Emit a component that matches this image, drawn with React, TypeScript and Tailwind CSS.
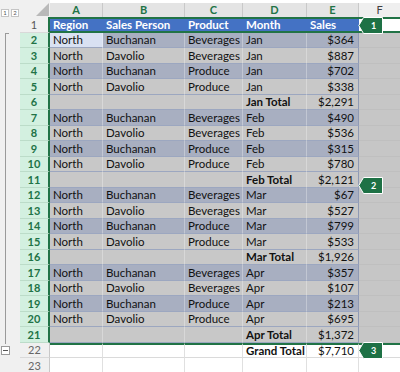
import clsx from "clsx"

const cn = clsx

type Kind = "head" | "blue" | "gray" | "total" | "grand" | "empty"

interface SheetRow {
  n: number
  kind: Kind
  cells: string[]
}

const rows: SheetRow[] = [
  { n: 1, kind: "head", cells: ["Region", "Sales Person", "Product", "Month", "Sales"] },
  { n: 2, kind: "blue", cells: ["North", "Buchanan", "Beverages", "Jan", "$364"] },
  { n: 3, kind: "gray", cells: ["North", "Davolio", "Beverages", "Jan", "$887"] },
  { n: 4, kind: "blue", cells: ["North", "Buchanan", "Produce", "Jan", "$702"] },
  { n: 5, kind: "gray", cells: ["North", "Davolio", "Produce", "Jan", "$338"] },
  { n: 6, kind: "total", cells: ["", "", "", "Jan Total", "$2,291"] },
  { n: 7, kind: "blue", cells: ["North", "Buchanan", "Beverages", "Feb", "$490"] },
  { n: 8, kind: "gray", cells: ["North", "Davolio", "Beverages", "Feb", "$536"] },
  { n: 9, kind: "blue", cells: ["North", "Buchanan", "Produce", "Feb", "$315"] },
  { n: 10, kind: "gray", cells: ["North", "Davolio", "Produce", "Feb", "$780"] },
  { n: 11, kind: "total", cells: ["", "", "", "Feb Total", "$2,121"] },
  { n: 12, kind: "blue", cells: ["North", "Buchanan", "Beverages", "Mar", "$67"] },
  { n: 13, kind: "gray", cells: ["North", "Davolio", "Beverages", "Mar", "$527"] },
  { n: 14, kind: "blue", cells: ["North", "Buchanan", "Produce", "Mar", "$799"] },
  { n: 15, kind: "gray", cells: ["North", "Davolio", "Produce", "Mar", "$533"] },
  { n: 16, kind: "total", cells: ["", "", "", "Mar Total", "$1,926"] },
  { n: 17, kind: "blue", cells: ["North", "Buchanan", "Beverages", "Apr", "$357"] },
  { n: 18, kind: "gray", cells: ["North", "Davolio", "Beverages", "Apr", "$107"] },
  { n: 19, kind: "blue", cells: ["North", "Buchanan", "Produce", "Apr", "$213"] },
  { n: 20, kind: "gray", cells: ["North", "Davolio", "Produce", "Apr", "$695"] },
  { n: 21, kind: "total", cells: ["", "", "", "Apr Total", "$1,372"] },
  { n: 22, kind: "grand", cells: ["", "", "", "Grand Total", "$7,710"] },
  { n: 23, kind: "empty", cells: ["", "", "", "", ""] },
]

const widths = ["w-[53px]", "w-[82px]", "w-[58px]", "w-[64px]", "w-[52px]"]
const letters = ["A", "B", "C", "D", "E"]

function cellClass(kind: Kind, col: number, active: boolean) {
  const last = col === 4
  switch (kind) {
    case "head":
      return "bg-[#4472c4] text-white font-bold border-y-2 border-[#217346]"
    case "blue":
    case "gray":
    case "total":
      return cn(
        active ? "bg-[#d9e1f2]" : kind === "blue" ? "bg-[#a8afc1]" : "bg-[#c8c8c8]",
        "border-b border-b-[#9ca7c0] border-r",
        last ? "border-r-[#8f9ab4]" : "border-r-white/30",
        kind === "total" && col === 3 && "font-bold",
      )
    case "grand":
      return cn(
        "bg-white border-t-2 border-t-[#217346] border-b border-b-[#dadada] border-r border-r-[#e0e0e0]",
        col === 3 && "font-bold",
      )
    default:
      return "bg-white border-b border-b-[#dadada] border-r border-r-[#e0e0e0]"
  }
}

function fClass(kind: Kind) {
  if (kind === "head") return "bg-white border-y-2 border-[#217346]"
  if (kind === "grand") return "bg-white border-t-2 border-t-[#217346] border-b border-b-[#dadada]"
  if (kind === "empty") return "bg-white border-b border-b-[#dadada]"
  return "bg-[#c6c6c6] border-b border-b-[#bfbfbf]"
}

function rowHeadClass(n: number) {
  if (n >= 2 && n <= 21)
    return "bg-[#d3f0e0] text-[#217346] font-bold border-r-2 border-r-[#217346] border-b border-b-[#bcdcc9]"
  if (n === 1) return "bg-[#f0f0f0] text-[#555] border-r-2 border-r-[#217346] border-b border-b-[#d9d9d9]"
  return "bg-[#f0f0f0] text-[#666] border-r border-r-[#c8c8c8] border-b border-b-[#d9d9d9]"
}

function Callout({ label, top }: { label: string; top: string }) {
  return (
    <div className={cn("absolute left-[358px] w-[25px] h-[17px]", top)}>
      <svg width="25" height="17" viewBox="0 0 25 17" className="absolute inset-0">
        <path d="M5.5 0.5 H24.5 V16.5 H5.5 L0.8 8.5 Z" fill="#1e7145" stroke="#ffffff" strokeWidth="1" />
      </svg>
      <span className="absolute left-[6px] right-0 top-0 h-[17px] flex items-center justify-center text-[9px] font-bold text-white">
        {label}
      </span>
    </div>
  )
}

export default function App() {
  return (
    <div className="relative w-[400px] h-[372px] overflow-hidden bg-white flex font-['Lato',sans-serif] text-[11.5px] text-[#111]">
      {/* outline gutter */}
      <div className="w-[20px] shrink-0 bg-[#f0f0f0] flex flex-col">
        <div className="h-[17px] flex items-end gap-[2px] pl-[1px]">
          {["1", "2"].map((b) => (
            <div
              key={b}
              className="w-[8px] h-[8px] bg-white border border-[#c4c4c4] text-[6px] leading-none text-[#555] flex items-center justify-center"
            >
              {b}
            </div>
          ))}
        </div>
        <div className="h-[15.5px]" />
        <div className="ml-[5px] w-[4px] h-[311px] border-l border-t border-[#9a9a9a]" />
        <div className="ml-[1px] mt-[2px] w-[9px] h-[9px] bg-white border border-[#9a9a9a] flex items-center justify-center">
          <div className="w-[5px] h-px bg-[#555]" />
        </div>
      </div>

      <div className="flex-1 flex flex-col">
        {/* column headers */}
        <div className="h-[17px] flex shrink-0">
          <div className="w-[30px] bg-[#f0f0f0] relative">
            <svg width="30" height="17" className="absolute inset-0">
              <path d="M16 16 L29 16 L29 3 Z" fill="#b9b9b9" />
            </svg>
          </div>
          {letters.map((l, i) => (
            <div
              key={l}
              className={cn(
                widths[i],
                "mt-[3px] bg-[#e4e4e4] border-r border-r-[#c9c9c9] flex items-center justify-center text-[11px] font-bold text-[#217346]",
              )}
            >
              {l}
            </div>
          ))}
          <div className="flex-1 mt-[3px] bg-[#efefef] flex items-center justify-center text-[11px] text-[#404040]">
            F
          </div>
        </div>

        {rows.map((r) => (
          <div key={r.n} className="h-[15.5px] flex shrink-0">
            <div className={cn("w-[30px] flex items-center justify-center text-[11px] leading-none", rowHeadClass(r.n))}>
              {r.n}
            </div>
            {r.cells.map((c, i) => (
              <div
                key={i}
                className={cn(
                  widths[i],
                  "flex items-center leading-none whitespace-nowrap overflow-hidden",
                  i === 4 && r.kind !== "head" ? "justify-end pr-[4px]" : "pl-[3px]",
                  cellClass(r.kind, i, r.n === 2 && i === 0),
                )}
              >
                {c}
              </div>
            ))}
            <div className={cn("flex-1", fClass(r.kind))} />
          </div>
        ))}
      </div>

      <Callout label="1" top="top-[17px]" />
      <Callout label="2" top="top-[177px]" />
      <Callout label="3" top="top-[342px]" />
    </div>
  )
}
